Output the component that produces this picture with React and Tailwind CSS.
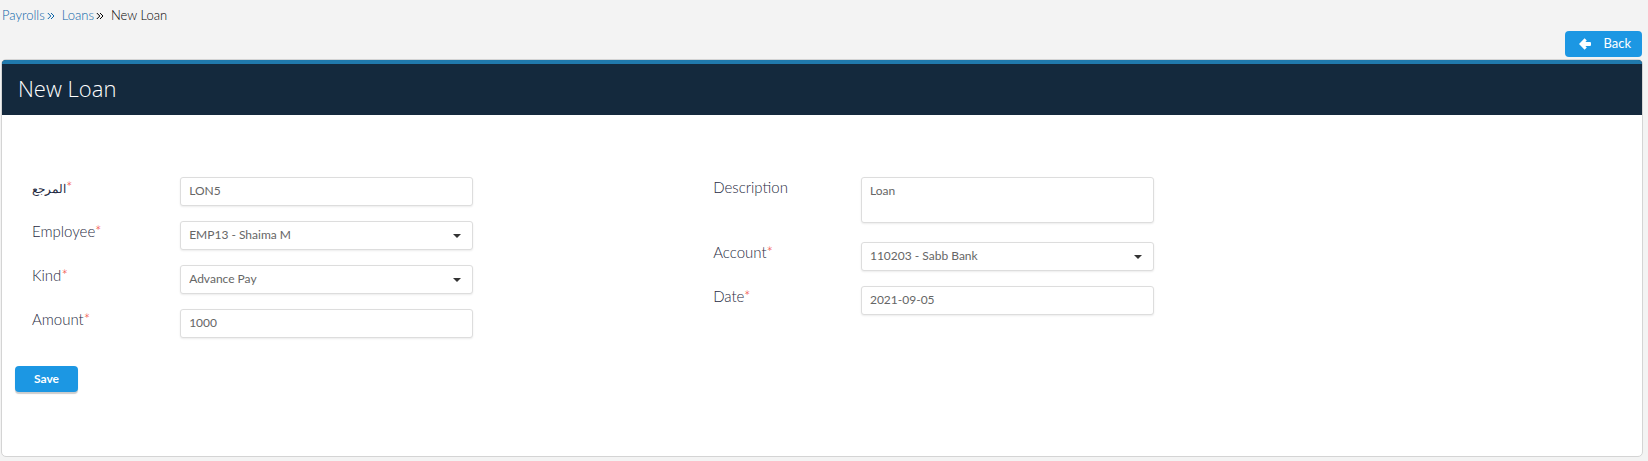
const EMPLOYEE_OPTIONS = ['EMP13 - Shaima M'];
const KIND_OPTIONS = ['Advance Pay'];
const ACCOUNT_OPTIONS = ['110203 - Sabb Bank'];

const controlClass =
  'block w-full rounded-[3px] border border-[#dddddd] bg-white px-2 text-[12px] font-normal text-[#666666] shadow-[0_1px_2px_rgba(0,0,0,0.08)] outline-none focus:border-[#1c97e3]';

function DoubleChevron() {
  return (
    <svg viewBox="0 0 8 8" className="mt-px h-2 w-2 fill-none stroke-current" strokeWidth="1" aria-hidden="true">
      <path d="M.8 1l3 3-3 3M4 1l3 3-3 3" />
    </svg>
  );
}

function Field({ id, label, required = false, children }) {
  return (
    <div className="grid grid-cols-[148fr_293fr] items-start">
      <label htmlFor={id} className="text-[15px] leading-5 font-light text-[#1f2b42]">
        {label}
        {required && <span className="text-[#f0342a]">*</span>}
      </label>
      {children}
    </div>
  );
}

function TextField({ id, label, value }) {
  return (
    <Field id={id} label={label} required>
      <input id={id} name={id} type="text" defaultValue={value} className={`${controlClass} h-[29px] pb-[2px]`} />
    </Field>
  );
}

function SelectField({ id, label, options }) {
  return (
    <Field id={id} label={label} required>
      <div className="relative">
        <select id={id} name={id} className={`${controlClass} h-[29px] appearance-none pr-8 pb-[2px]`}>
          {options.map(option => (
            <option key={option}>{option}</option>
          ))}
        </select>
        <svg viewBox="0 0 8 4" className="pointer-events-none absolute top-[13px] right-3 h-1 w-2 fill-[#333333]" aria-hidden="true">
          <path d="M0 0h8L4 4z" />
        </svg>
      </div>
    </Field>
  );
}

export default function App() {
  return (
    <div className="min-h-screen bg-[#f3f3f3] pr-[5px] pb-1 pl-px font-['Lato','DejaVu_Sans',sans-serif] text-[13px] font-light text-black">
      <nav aria-label="Breadcrumb" className="flex h-[31px] items-center pl-px">
        <a href="#payrolls" className="flex items-center gap-[2px] text-[#0a63a8]">
          Payrolls
          <DoubleChevron />
        </a>
        <a href="#loans" className="ml-[7px] text-[#0a63a8]">Loans</a>
        <span className="ml-[2px]">
          <DoubleChevron />
        </span>
        <span className="ml-[7px]">New Loan</span>
      </nav>

      <div className="flex justify-end pr-px pb-[2px]">
        <button
          type="button"
          className="flex h-[26px] items-center gap-3 rounded bg-[#1c97e3] pr-[11px] pl-[14px] text-[13px] font-normal text-white cursor-pointer"
        >
          <svg viewBox="0 0 12 12" className="h-3 w-3 fill-current" aria-hidden="true">
            <path d="M0 6L5.6 .2 7.8 2.4 6.4 4h4.6q1 0 1 1v2q0 1-1 1H6.4l1.4 1.6-2.2 2.2z" />
          </svg>
          Back
        </button>
      </div>

      <section className="overflow-hidden rounded-[5px] border border-[#d4d4d4] bg-white pb-16">
        <header className="flex h-[55px] items-center border-t-4 border-[#2079ac] bg-[#14293d] pb-[2px] pl-4">
          <h1 className="font-['Open_Sans',sans-serif] text-[22px] font-light text-white">New Loan</h1>
        </header>

        <form onSubmit={e => e.preventDefault()}>
          <div className="grid grid-cols-[442fr_240fr_441fr_489fr] pt-[62px] pl-[30px]">
            <div className="flex flex-col gap-[15px]">
              <TextField id="reference" label={<bdi className="text-[12px]">المرجع</bdi>} value="LON5" />
              <SelectField id="employee" label="Employee" options={EMPLOYEE_OPTIONS} />
              <SelectField id="kind" label="Kind" options={KIND_OPTIONS} />
              <TextField id="amount" label="Amount" value="1000" />
            </div>

            <div className="col-start-3 flex flex-col gap-[15px]">
              <Field id="description" label="Description">
                <textarea
                  id="description"
                  name="description"
                  defaultValue="Loan"
                  className={`${controlClass} mb-1 h-[46px] resize-none pt-1`}
                />
              </Field>
              <SelectField id="account" label="Account" options={ACCOUNT_OPTIONS} />
              <TextField id="date" label="Date" value="2021-09-05" />
            </div>
          </div>

          <button
            type="submit"
            className="mt-7 ml-[13px] h-[26px] w-[63px] rounded bg-[#1c97e3] text-[12px] font-bold text-white shadow-[0_2px_1px_rgba(0,0,0,0.2)] cursor-pointer"
          >
            Save
          </button>
        </form>
      </section>
    </div>
  );
}
